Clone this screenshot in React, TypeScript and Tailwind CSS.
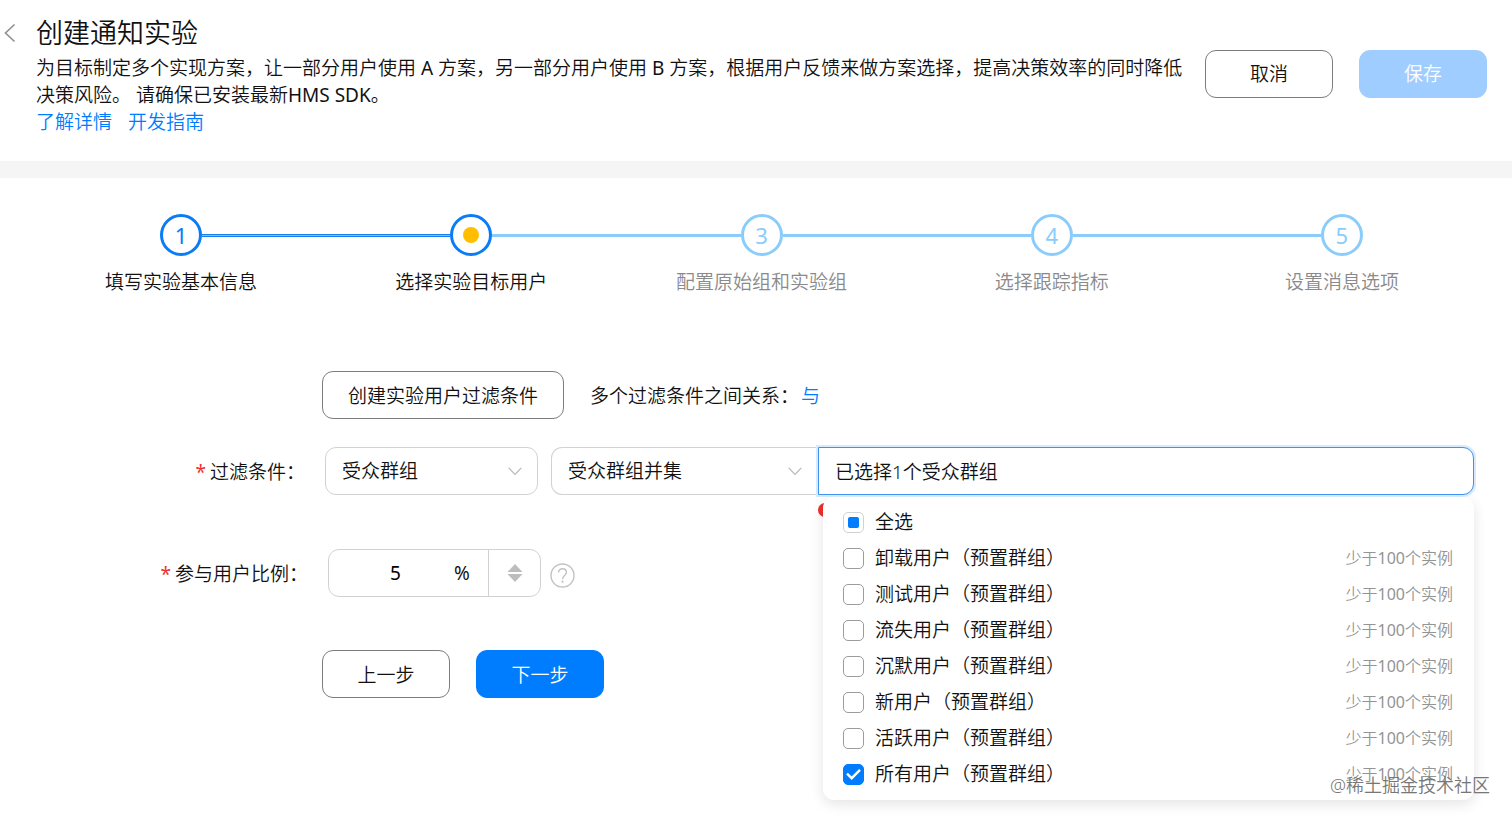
import React, { useState } from "react";

interface Audience {
  id: string;
  name: string;
  count: number;
}

const STEPS = [
  "填写实验基本信息",
  "选择实验目标用户",
  "配置原始组和实验组",
  "选择跟踪指标",
  "设置消息选项",
];

const CURRENT_STEP = 1;

const AUDIENCES: Audience[] = [
  { id: "uninstalled", name: "卸载用户（预置群组）", count: 100 },
  { id: "test", name: "测试用户（预置群组）", count: 100 },
  { id: "lost", name: "流失用户（预置群组）", count: 100 },
  { id: "silent", name: "沉默用户（预置群组）", count: 100 },
  { id: "new", name: "新用户（预置群组）", count: 100 },
  { id: "active", name: "活跃用户（预置群组）", count: 100 },
  { id: "all", name: "所有用户（预置群组）", count: 100 },
];

interface ButtonProps {
  type?: "button" | "submit";
  className: string;
  children: React.ReactNode;
}

const Button: React.FC<ButtonProps> = ({ type = "button", className, children }) => (
  <button type={type} className={`h-12 rounded-[11px] border pt-[2px] ${className}`}>
    {children}
  </button>
);

// Latin words and digits are a step heavier than the Chinese text
const Latin: React.FC<{ children: React.ReactNode }> = ({ children }) => (
  <span className="font-normal">{children}</span>
);

const Header: React.FC = () => (
  <header className="flex items-center border-b-[17px] border-[#f5f5f5] pt-[11px] pr-[25px] pb-[25px]">
    <button type="button" aria-label="返回" className="flex h-11 w-9 shrink-0 items-center self-start pl-1">
      <svg width="12" height="20" viewBox="0 0 12 20" fill="none" stroke="#8f8f8f" strokeWidth="1.6">
        <path d="M10.5 1.5 1.5 10l9 8.5" />
      </svg>
    </button>
    <div className="min-w-0 flex-1">
      <h1 className="text-[27px] leading-11">创建通知实验</h1>
      <p>
        为目标制定多个实现方案，让一部分用户使用 <Latin>A</Latin> 方案，另一部分用户使用 <Latin>B</Latin>{" "}
        方案，根据用户反馈来做方案选择，提高决策效率的同时降低决策风险。 请确保已安装最新<Latin>HMS SDK</Latin>。
      </p>
      <div className="flex gap-4 text-[#007dff]">
        <a href="#details">了解详情</a>
        <a href="#guide">开发指南</a>
      </div>
    </div>
    <div className="ml-4 flex shrink-0 gap-[26px]">
      <Button className="w-32 border-[#7d7d7d]">取消</Button>
      <Button className="w-32 border-[#9fcdff] bg-[#9fcdff] text-white">保存</Button>
    </div>
  </header>
);

// Line segment on either side of a step circle
const StepLine: React.FC<{ hidden: boolean; done: boolean }> = ({ hidden, done }) => (
  <span
    className={`h-[3px] flex-1 ${
      hidden ? "" : done ? "border-y border-[#1a80f0] bg-[#7cc0fb]" : "bg-[#8acdfc]"
    }`}
  />
);

const Stepper: React.FC = () => (
  <ol className="grid grid-cols-5 pt-9 pr-[25px] pl-9">
    {STEPS.map((label, i) => {
      const reached = i <= CURRENT_STEP;
      return (
        <li key={label} className="flex flex-col items-center gap-[13px]">
          <div className="flex w-full items-center">
            <StepLine hidden={i === 0} done={reached} />
            <span
              className={`flex size-[42px] items-center justify-center rounded-full border-[3px] text-[22px] font-normal ${
                reached ? "border-[#0a7cf5] text-[#0a7cf5]" : "border-[#8acdfc] text-[#8acdfc]"
              }`}
            >
              {i === CURRENT_STEP ? <span className="size-4 rounded-full bg-[#ffbf00]" /> : i + 1}
            </span>
            <StepLine hidden={i === STEPS.length - 1} done={i < CURRENT_STEP} />
          </div>
          <span className={reached ? "" : "text-[#8a8a8a]"}>{label}</span>
        </li>
      );
    })}
  </ol>
);

interface SelectBoxProps {
  id: string;
  label: string;
  options: string[];
  className: string;
}

const SelectBox: React.FC<SelectBoxProps> = ({ id, label, options, className }) => (
  <div className="relative shrink-0">
    <select
      id={id}
      aria-label={label}
      className={`h-12 appearance-none border-[#d2d2d2] bg-white px-4 outline-none ${className}`}
    >
      {options.map((option) => (
        <option key={option}>{option}</option>
      ))}
    </select>
    <svg
      className="pointer-events-none absolute top-5 right-4"
      width="14"
      height="9"
      viewBox="0 0 14 9"
      fill="none"
      stroke="#b9b9b9"
      strokeWidth="1.2"
    >
      <path d="M.7.9 7 7.5 13.3.9" />
    </svg>
  </div>
);

interface CheckRowProps {
  label: string;
  count?: number;
  checked: boolean;
  partial?: boolean;
  onChange: () => void;
}

const CheckRow: React.FC<CheckRowProps> = ({ label, count, checked, partial = false, onChange }) => (
  <label className="flex h-9 items-center gap-[11px]">
    <span className="grid size-[21px] place-items-center">
      <input
        type="checkbox"
        checked={checked}
        onChange={onChange}
        ref={(el) => {
          if (el) el.indeterminate = partial;
        }}
        className={`col-start-1 row-start-1 grid size-[21px] appearance-none place-items-center rounded-[5px] border checked:border-[#007dff] checked:bg-[#007dff] indeterminate:before:size-[11px] indeterminate:before:rounded-[2px] indeterminate:before:bg-[#007dff] ${
          partial ? "border-[#d2d2d2]" : "border-[#9c9c9c]"
        }`}
      />
      {checked && (
        <svg
          className="pointer-events-none col-start-1 row-start-1"
          width="15"
          height="12"
          viewBox="0 0 15 12"
          fill="none"
          stroke="#fff"
          strokeWidth="2.4"
        >
          <path d="M1 5.6 5.7 10.2 14 1.8" />
        </svg>
      )}
    </span>
    <span>{label}</span>
    {count !== undefined && (
      <span className="ml-auto text-base text-[#949494]">
        少于<Latin>{count}</Latin>个实例
      </span>
    )}
  </label>
);

const AudiencePicker: React.FC = () => {
  const [selected, setSelected] = useState<string[]>(["all"]);
  const allSelected = selected.length === AUDIENCES.length;

  const toggle = (id: string) => {
    setSelected((prev) => (prev.includes(id) ? prev.filter((x) => x !== id) : [...prev, id]));
  };

  return (
    <div className="relative min-w-0 flex-1">
      <input
        type="text"
        readOnly
        aria-label="受众群组"
        value={`已选择${selected.length}个受众群组`}
        className="relative z-20 h-12 w-full rounded-r-[11px] border border-[#3f93ee] bg-white px-4 shadow-[0_0_0_2px_#d6eaff] outline-none"
      />
      <span className="mt-2 block size-[14px] rounded-full bg-[#f0302b]" />

      <div className="absolute top-[50px] right-0 left-[5px] z-10 rounded-[11px] bg-white pt-[7px] pr-[21px] pb-2 pl-5 shadow-[0_4px_14px_rgba(0,0,0,0.11)]">
        <CheckRow
          label="全选"
          checked={allSelected}
          partial={selected.length > 0 && !allSelected}
          onChange={() => setSelected(allSelected ? [] : AUDIENCES.map((a) => a.id))}
        />
        {AUDIENCES.map((a) => (
          <CheckRow
            key={a.id}
            label={a.name}
            count={a.count}
            checked={selected.includes(a.id)}
            onChange={() => toggle(a.id)}
          />
        ))}
      </div>
    </div>
  );
};

const RatioInput: React.FC = () => {
  const [ratio, setRatio] = useState(5);

  return (
    <div className="flex h-12 w-[213px] overflow-hidden rounded-[11px] border border-[#d2d2d2]">
      <input
        id="ratio"
        type="text"
        inputMode="numeric"
        value={ratio}
        onChange={(e) => setRatio(Number(e.target.value) || 0)}
        className="w-[125px] pl-2 text-center font-normal text-black outline-none"
      />
      <span className="flex w-[34px] items-center font-normal">%</span>
      <div className="flex flex-1 flex-col items-center justify-center gap-[2px] border-l border-[#d2d2d2]">
        <button type="button" aria-label="增加" onClick={() => setRatio(Math.min(100, ratio + 1))}>
          <svg className="block" width="16" height="8" viewBox="0 0 16 8" fill="#bdbdbd">
            <path d="M8 0 15.5 8H.5z" />
          </svg>
        </button>
        <button type="button" aria-label="减少" onClick={() => setRatio(Math.max(0, ratio - 1))}>
          <svg className="block" width="16" height="8" viewBox="0 0 16 8" fill="#bdbdbd">
            <path d="M.5 0h15L8 8z" />
          </svg>
        </button>
      </div>
    </div>
  );
};

const TargetForm: React.FC = () => (
  <form className="pt-[75px] pr-[38px]" onSubmit={(e) => e.preventDefault()}>
    <div className="flex items-center pl-[322px]">
      <Button className="border-[#7d7d7d] px-[25px]">创建实验用户过滤条件</Button>
      <div className="ml-[26px] flex gap-[2px] pt-[2px]">
        <span>多个过滤条件之间关系：</span>
        <a href="#relation" className="text-[#007dff]">
          与
        </a>
      </div>
    </div>

    <div className="mt-7 flex items-start">
      <label htmlFor="filter" className="mr-5 w-[305px] text-right leading-[50px]">
        <span className="mr-1 font-normal text-[#f0302b]">*</span>过滤条件：
      </label>
      <SelectBox
        id="filter"
        label="过滤条件"
        options={["受众群组", "应用版本", "国家/地区"]}
        className="w-[213px] rounded-[11px] border"
      />
      <div className="ml-[13px] flex flex-1">
        <SelectBox
          id="filter-mode"
          label="匹配方式"
          options={["受众群组并集", "受众群组交集"]}
          className="w-[267px] rounded-l-[11px] border border-r-0"
        />
        <AudiencePicker />
      </div>
    </div>

    <div className="mt-8 flex items-start">
      <label htmlFor="ratio" className="mr-5 w-[308px] text-right leading-[50px]">
        <span className="mr-1 font-normal text-[#f0302b]">*</span>参与用户比例：
      </label>
      <RatioInput />
      <button type="button" aria-label="帮助" className="ml-[9px] flex h-[52px] items-center">
        <svg className="block" width="25" height="25" viewBox="0 0 25 25" fill="none" stroke="#c2c2c2" strokeWidth="1.4">
          <circle cx="12.5" cy="12.5" r="11.5" />
          <path d="M8.6 9.6c0-2.3 1.6-3.9 3.9-3.9s3.9 1.5 3.9 3.6c0 3-3.9 3.3-3.9 6.9" />
          <circle cx="12.5" cy="18.7" r="1.1" fill="#c2c2c2" stroke="none" />
        </svg>
      </button>
    </div>

    <div className="mt-[49px] flex gap-[26px] pl-[322px]">
      <Button className="w-32 border-[#7d7d7d]">上一步</Button>
      <Button type="submit" className="w-32 border-[#007dff] bg-[#007dff] text-white">
        下一步
      </Button>
    </div>
  </form>
);

const App: React.FC = () => {
  return (
    <div className="relative min-h-screen bg-white font-['Noto_Sans','Noto_Sans_CJK_SC',sans-serif] text-[19px] leading-[27px] font-[350] text-[#111]">
      <Header />
      <main>
        <Stepper />
        <TargetForm />
      </main>
      <span className="pointer-events-none absolute right-[22px] bottom-5 z-30 text-lg leading-6 text-[#777]">
        @稀土掘金技术社区
      </span>
    </div>
  );
};

export default App;
